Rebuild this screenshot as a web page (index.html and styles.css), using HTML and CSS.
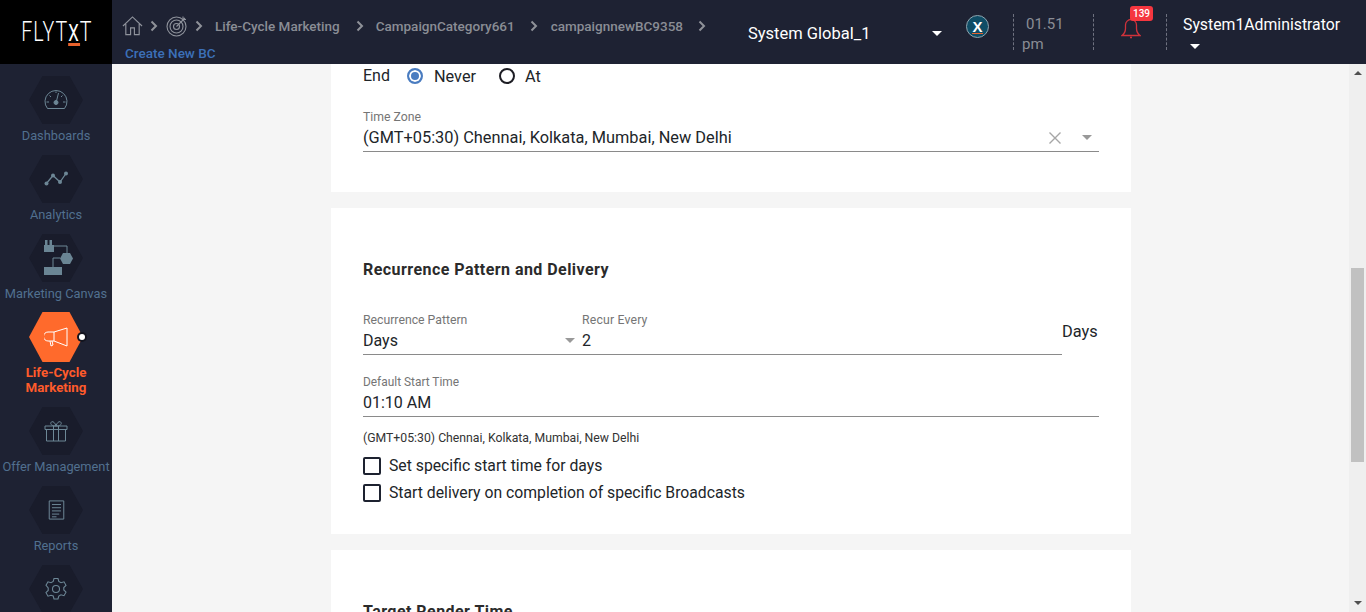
FILE: index.html
```html
<!DOCTYPE html>
<html lang="en">
<head>
<meta charset="utf-8">
<title>Create New BC</title>
<link rel="stylesheet" href="styles.css">
</head>
<body>
<header class="topbar">
  <div class="logo"><span class="logo-text">FLYT<span class="logo-x">X</span>T</span></div>
  <div class="crumbs">
    <div class="crumb-row">
      <svg class="ic-home" viewBox="0 0 22 22" fill="none" stroke="#8f939c" stroke-width="1.2"><path d="M1 11 11 1.500 21 11M4 9v11h5v-7h4v7h5V9"/></svg>
      <svg class="chev" viewBox="0 0 8 12" fill="none" stroke="#8f9299" stroke-width="2"><path d="M1.500 1.500 6 6l-4.500 4.500"/></svg>
      <svg class="ic-target" viewBox="0 0 22 22" fill="none" stroke="#8f939c" stroke-width="1.100"><circle cx="10.500" cy="11.500" r="9.500"/><circle cx="10.500" cy="11.500" r="6.500"/><circle cx="10.500" cy="11.500" r="3"/><path d="M10.500 11.500 19 3M17 1.500v3h3"/></svg>
      <svg class="chev" viewBox="0 0 8 12" fill="none" stroke="#8f9299" stroke-width="2"><path d="M1.500 1.500 6 6l-4.500 4.500"/></svg>
      <span class="crumb c1">Life-Cycle Marketing</span>
      <svg class="chev chev-life" viewBox="0 0 8 12" fill="none" stroke="#8f9299" stroke-width="2"><path d="M1.500 1.500 6 6l-4.500 4.500"/></svg>
      <span class="crumb c2">CampaignCategory661</span>
      <svg class="chev" viewBox="0 0 8 12" fill="none" stroke="#8f9299" stroke-width="2"><path d="M1.500 1.500 6 6l-4.500 4.500"/></svg>
      <span class="crumb">campaignnewBC9358</span>
      <svg class="chev" viewBox="0 0 8 12" fill="none" stroke="#8f9299" stroke-width="2"><path d="M1.500 1.500 6 6l-4.500 4.500"/></svg>
    </div>
    <div class="page-link">Create New BC</div>
  </div>
  <div class="org">
    <span>System Global_1</span>
    <i class="caret caret-white"></i>
  </div>
  <div class="xbadge"><span>X</span></div>
  <div class="clock"><span class="clock-time">01.51</span><span>pm</span></div>
  <div class="bell">
    <svg viewBox="0 0 20 22" fill="none" stroke="#d0323b" stroke-width="1.300"><path d="M1 18.500c2.500-2 3.500-4 3.500-7V8a5.500 5.500 0 0 1 11 0v3.500c0 3 1 5 3.500 7zM9 20.500h2"/></svg>
    <span class="bell-count">139</span>
  </div>
  <div class="user">
    <span>System1Administrator</span>
    <i class="caret caret-white caret-user"></i>
  </div>
</header>
<div class="body-row">
  <nav class="sidebar">
    <div class="nav-item">
      <div class="hex"><svg viewBox="0 0 24 24" fill="none" stroke="#6d8796" stroke-width="1"><path d="M3.500 20.500a11 11 0 1 1 17 0z"/><circle cx="12" cy="14.500" r="2" fill="#6d8796"/><path d="M12.500 13 14.500 5M2.500 14h2.500M19 14h2.500M5.500 7.500l1.500 1.500M12 3.500V5M18.500 7.500 17 9"/></svg></div>
      <span class="nav-label">Dashboards</span>
    </div>
    <div class="nav-item">
      <div class="hex"><svg viewBox="0 0 24 24" fill="none" stroke="#6d8796" stroke-width="1.300"><path d="M2 17 9 8.500 16 15 22 6.500"/><g fill="#6d8796" stroke="none"><circle cx="2.500" cy="16.500" r="2"/><circle cx="9" cy="8.500" r="2"/><circle cx="16" cy="15" r="2"/><circle cx="22" cy="6.500" r="2"/></g></svg></div>
      <span class="nav-label">Analytics</span>
    </div>
    <div class="nav-item">
      <div class="hex hex-canvas"><svg viewBox="0 0 54 48" fill="none" stroke="#6d8796" stroke-width="1"><path d="M25 12h13v7M31 24h-7v9"/><g fill="#6a8594" stroke="none"><path d="M15 11h10v7H15z"/><path d="M16 6h2.500v5H16zM20.500 6H23v5h-2.500z"/><path d="M34 19h7l3 5.500-3 5.500h-7l-3-5.500z"/><path d="M15 33h18v8H15z"/></g></svg></div>
      <span class="nav-label">Marketing Canvas</span>
    </div>
    <div class="nav-item nav-active">
      <div class="hex"><svg viewBox="0 0 24 20" fill="none" stroke="#fff" stroke-width="1"><path d="M10 5H4a3.500 3.500 0 0 0 0 9h6zM10 5l13-4v18l-13-5M6 14l1 5 2-1-1-4"/></svg><span class="pin"></span></div>
      <span class="nav-label">Life-Cycle Marketing</span>
    </div>
    <div class="nav-item">
      <div class="hex"><svg viewBox="0 0 24 22" fill="none" stroke="#6d8796" stroke-width="1"><path d="M1 6h22v3.500H1zM2.500 9.500V21h19V9.500M9.500 6v15M14.500 6v15M12 6C8 6 6 4.500 7 2.500S11 2 12 6c1-4 4-5.500 5-3.500S16 6 12 6z"/></svg></div>
      <span class="nav-label">Offer Management</span>
    </div>
    <div class="nav-item">
      <div class="hex hex-reports"><svg viewBox="0 0 18 22" fill="none" stroke="#6d8796" stroke-width="1.100"><path d="M1 1h16v20H1zM4 5h10M4 8.500h10M4 12h10M4 15.500h8M4 18.500h5"/></svg></div>
      <span class="nav-label">Reports</span>
    </div>
    <div class="nav-item">
      <div class="hex"><svg viewBox="0 0 24 24" fill="none" stroke="#6d8796" stroke-width="1.100"><circle cx="12" cy="12" r="3.500"/><path d="M10 1.500h4l.8 3 2.200 1.200 3-.9 2 3.500-2.200 2.200v2.500l2.200 2.200-2 3.500-3-.9-2.200 1.200-.8 3h-4l-.8-3L7 18.300l-3 .9-2-3.500 2.200-2.200v-2.500L2 8.300l2-3.500 3 .9 2.200-1.200z"/></svg></div>
    </div>
  </nav>
  <main class="content">
    <div class="cards">
      <section class="card card-first">
        <div class="end-row">
          <span class="end-label">End</span>
          <span class="radio radio-on"></span><span class="radio-text radio-never">Never</span>
          <span class="radio radio-off"></span><span class="radio-text">At</span>
        </div>
        <div class="field field-tz">
          <label class="field-label">Time Zone</label>
          <div class="field-value">
            <span class="grow tz-value">(GMT+05:30) Chennai, Kolkata, Mumbai, New Delhi</span>
            <svg class="clear" viewBox="0 0 12 12" fill="none" stroke="#a6a6a6" stroke-width="1.400"><path d="M.5.500l11 11M11.500.500l-11 11"/></svg>
            <i class="caret caret-grey"></i>
          </div>
        </div>
      </section>
      <section class="card card-second">
        <h2 class="card-title">Recurrence Pattern and Delivery</h2>
        <div class="recur-row">
          <div class="field field-pattern">
            <label class="field-label">Recurrence Pattern</label>
            <div class="field-value">
              <span class="grow">Days</span>
              <i class="caret caret-grey"></i>
            </div>
          </div>
          <div class="field field-every">
            <label class="field-label">Recur Every</label>
            <div class="field-value"><span>2</span></div>
          </div>
          <span class="unit">Days</span>
        </div>
        <div class="field field-start">
          <label class="field-label">Default Start Time</label>
          <div class="field-value"><span>01:10 AM</span></div>
        </div>
        <p class="tz-note">(GMT+05:30) Chennai, Kolkata, Mumbai, New Delhi</p>
        <div class="check-row"><span class="check"></span><span>Set specific start time for days</span></div>
        <div class="check-row check-row-2"><span class="check"></span><span>Start delivery on completion of specific Broadcasts</span></div>
      </section>
      <section class="card card-third">
        <h2 class="card-title">Target Render Time</h2>
      </section>
    </div>
  </main>
  <div class="scrollbar">
    <i class="arrow arrow-up"></i>
    <div class="track"><div class="thumb"></div></div>
    <i class="arrow arrow-down"></i>
  </div>
</div>
</body>
</html>
```
FILE: styles.css
```css
* { box-sizing: border-box; }
html, body { margin: 0; height: 612px; overflow: hidden; }
body { font-family: Roboto, "Liberation Sans", sans-serif; background: #f5f5f5; color: #212529; display: flex; flex-direction: column; }

.topbar { height: 64px; flex: none; background: #1e2233; display: flex; color: #fff; }
.logo { width: 112px; background: #000; flex: none; color: #fff; display: flex; align-items: center; justify-content: center; overflow: hidden; padding-left: 1px; }
.logo-text { display: inline-block; font-size: 28px; line-height: 64px; font-weight: 300; letter-spacing: 1.5px; transform: scaleX(.7); white-space: nowrap; }
.logo-x { display: inline-block; font-size: 24px; line-height: 19px; font-weight: 400; border-bottom: 3px solid #e8622c; }
.crumbs { width: 623px; flex: none; padding: 15px 0 0 10px; }
.crumb-row { display: flex; align-items: center; height: 22px; }
.ic-home { width: 21px; height: 22px; }
.ic-target { width: 22px; height: 22px; margin-left: 8px; }
.chev { width: 8px; height: 12px; margin-left: 7px; flex: none; }
.crumb { font-size: 13.500px; font-weight: 500; color: #8a8d95; margin-left: 13px; white-space: nowrap; }
.crumb.c1 { margin-left: 12px; }
.crumb.c2 { margin-left: 12px; }
.crumb + .chev { margin-left: 15px; }
.crumb + .chev-life { margin-left: 16px; }
.page-link { font-size: 13.500px; font-weight: 500; color: #3c70b8; margin: 8px 0 0 3px; }
.org { width: 220px; flex: none; display: flex; align-items: center; padding: 0 13px; justify-content: space-between; font-size: 16.500px; margin-top: 2px; }
.caret { display: inline-block; width: 0; height: 0; border-left: 5px solid transparent; border-right: 5px solid transparent; flex: none; }
.caret-white { border-top: 5px solid #fff; }
.caret-grey { border-top: 5px solid #999; }
.xbadge { width: 23px; height: 23px; border-radius: 50%; background: #0f4d66; border: 1px solid #8fa4ae; margin: 15px 24px 0 11px; flex: none; display: flex; align-items: center; justify-content: center; font: 700 15px "Liberation Sans", sans-serif; color: #fff; }
.xbadge span { border-bottom: 1px solid #e8622c; line-height: 13px; }
.clock { width: 81px; height: 36px; margin-top: 14px; flex: none; border-left: 1px dashed #6f7280; border-right: 1px dashed #6f7280; color: #8a8d95; font-size: 15px; padding-left: 8px; display: flex; flex-direction: column; line-height: 20px; }
.clock-time { padding-left: 4px; }
.bell { position: relative; width: 73px; height: 36px; margin-top: 14px; flex: none; border-right: 1px dashed #6f7280; }
.bell svg { position: absolute; left: 27px; top: 3px; width: 20px; height: 22px; }
.bell-count { position: absolute; left: 36px; top: -8px; width: 23px; height: 15px; background: #f5363f; border-radius: 3px; font-size: 10px; line-height: 15px; text-align: center; color: #fff; font-weight: 500; }
.user { padding: 15px 0 0 16px; font-size: 15.800px; display: flex; flex-direction: column; align-items: flex-start; line-height: 20px; }
.caret-user { margin: 9px 0 0 7px; }

.body-row { flex: 1; min-height: 0; display: flex; }
.sidebar { width: 112px; flex: none; background: #1e2233; padding-top: 12px; overflow: hidden; display: flex; flex-direction: column; gap: 11px; }
.nav-item { display: flex; flex-direction: column; align-items: center; text-align: center; }
.hex { width: 54px; height: 48px; flex: none; position: relative; display: flex; align-items: center; justify-content: center; }
.hex::before { content: ""; position: absolute; inset: 0; background: #191c2b; clip-path: polygon(25% 0, 75% 0, 100% 50%, 75% 100%, 25% 100%, 0 50%); }
.hex svg { position: relative; width: 24px; height: 24px; }
.hex-canvas svg { width: 54px; height: 48px; }
.hex-reports svg { width: 17px; height: 20px; }
.nav-label { font-size: 12.800px; line-height: 16px; margin-top: 4px; color: #51708f; white-space: nowrap; }
.nav-active .hex::before { background: #ff6a2c; inset: -1px 0; }
.nav-active .nav-label { color: #ff5b2b; font-weight: 700; font-size: 13.300px; white-space: normal; width: 90px; line-height: 15px; margin-top: 4px; margin-bottom: 1px; }
.pin { position: absolute; left: 50px; top: 21px; width: 6px; height: 6px; border-radius: 50%; background: #fff; box-shadow: 0 0 0 2px #12141f; }

.content { flex: 1; min-width: 0; overflow: hidden; background: #f5f5f5; }
.cards { width: 800px; margin: 0 0 0 219px; display: flex; flex-direction: column; gap: 16px; }
.card { background: #fff; padding: 0 32px; }
.card-first { height: 128px; }
.end-row { display: flex; align-items: center; font-size: 16px; height: 24px; }
.end-label { margin-right: 17px; margin-top: -2px; }
.radio { width: 16px; height: 16px; border-radius: 50%; flex: none; }
.radio-on { background: #4a7cc0; border: 2px solid #4a7cc0; box-shadow: inset 0 0 0 2px #fff; }
.radio-off { border: 2px solid #1d1d24; margin-left: 23px; }
.radio-text { margin-left: 10px; font-size: 16.300px; }
.radio-never { margin-left: 11px; }
.field-label { display: block; font-size: 12.250px; line-height: 14px; color: #757575; }
.field-value { display: flex; align-items: center; font-size: 16px; line-height: 19px; height: 28px; border-bottom: 1px solid #8a8a8a; }
.tz-value { font-size: 16.350px; }
.grow { flex: 1; }
.field-tz { margin-top: 22px; }
.clear { width: 12px; height: 12px; margin-right: 21px; }
.field-tz .caret-grey { margin-right: 7px; }
.card-second { height: 326px; padding-top: 52px; }
.card-title { margin: 0; font-size: 16px; line-height: 20px; font-weight: 700; color: #2b2b2b; letter-spacing: .45px; }
.recur-row { display: flex; align-items: flex-end; margin-top: 33px; }
.field-pattern { width: 219px; flex: none; }
.field-pattern .field-value { padding-right: 7px; }
.field-every { flex: 1; }
.field-every .field-label { letter-spacing: .18px; }
.unit { font-size: 16.350px; width: 37px; text-align: left; margin-bottom: 14px; flex: none; }
.field-start { margin-top: 20px; }
.field-start .field-label { font-size: 11.900px; }
.tz-note { margin: 14px 0 0; font-size: 12.250px; line-height: 14px; color: #333; }
.check-row { display: flex; align-items: center; font-size: 15.750px; line-height: 20px; gap: 8px; margin-top: 11px; }
.check-row-2 { margin-top: 7px; }
.check { width: 18px; height: 18px; border: 2px solid #1d2230; border-radius: 2px; flex: none; }
.card-third { height: 120px; padding-top: 52px; }

.scrollbar { width: 17px; flex: none; background: #efefef; display: flex; flex-direction: column; align-items: center; }
.arrow { width: 0; height: 0; border-left: 4px solid transparent; border-right: 4px solid transparent; flex: none; }
.arrow-up { border-bottom: 4px solid #505050; margin: 7px 0 6px; }
.arrow-down { border-top: 4px solid #505050; margin: 6px 0 7px; }
.track { flex: 1; width: 100%; padding: 187px 2px 0; min-height: 0; }
.thumb { height: 194px; background: #c1c1c1; }
```
